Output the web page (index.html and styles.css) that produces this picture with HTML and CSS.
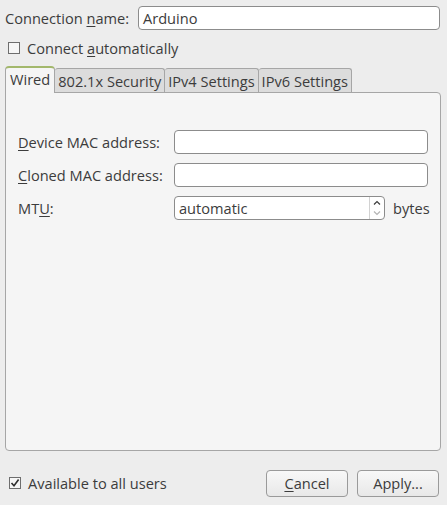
FILE: index.html
```html
<!DOCTYPE html>
<html>
<head>
<meta charset="utf-8">
<link rel="stylesheet" href="styles.css">
</head>
<body>
<div class="dialog">
  <div class="name-row">
    <span class="name-label">Connection <u>n</u>ame:</span>
    <div class="entry name-entry">Arduino</div>
  </div>
  <div class="check-row top-check">
    <span class="checkbox"></span>
    <span>Connect <u>a</u>utomatically</span>
  </div>
  <div class="notebook">
    <div class="tabs">
      <div class="tab active">Wired</div>
      <div class="tab">802.1x Security</div>
      <div class="tab">IPv4 Settings</div>
      <div class="tab">IPv6 Settings</div>
    </div>
    <div class="panel">
      <div class="form">
        <span class="flabel"><u>D</u>evice MAC address:</span>
        <div class="entry wide"></div>
        <span class="flabel"><u>C</u>loned MAC address:</span>
        <div class="entry wide"></div>
        <span class="flabel">MT<u>U</u>:</span>
        <div class="mtu">
          <div class="entry spin">
            <span class="spin-text">automatic</span>
            <span class="spin-btns">
              <svg width="10" height="22" viewBox="0 0 10 22">
                <path d="M2 7.5 L5 4.5 L8 7.5" fill="none" stroke="#3c3c3c" stroke-width="1.2"/>
                <path d="M2 14.5 L5 17.5 L8 14.5" fill="none" stroke="#b4b4b4" stroke-width="1.2"/>
              </svg>
            </span>
          </div>
          <span class="unit">bytes</span>
        </div>
      </div>
    </div>
  </div>
  <div class="footer">
    <div class="check-row">
      <span class="checkbox checked">
        <svg width="10" height="10" viewBox="0 0 10 10"><path d="M1.5 5 L4 7.8 L8.6 1.6" fill="none" stroke="#2e2e2e" stroke-width="1.6"/></svg>
      </span>
      <span>Available to all users</span>
    </div>
    <div class="buttons">
      <div class="button"><u>C</u>ancel</div>
      <div class="button">Apply...</div>
    </div>
  </div>
</div>
</body>
</html>
```
FILE: styles.css
```css
html, body {
  margin: 0;
  padding: 0;
  background: #ededed;
}
body {
  font-family: "Open Sans", "Noto Sans", "DejaVu Sans", sans-serif;
  font-size: 14.6px;
  color: #3c3c3c;
}
u {
  text-decoration: underline;
  text-underline-offset: 2px;
}
.dialog {
  width: 447px;
  height: 505px;
  box-sizing: border-box;
  padding: 6px 6px 8px 5px;
  display: flex;
  flex-direction: column;
}
.name-row {
  display: flex;
  align-items: center;
  height: 24px;
}
.name-label {
  width: 133px;
}
.entry {
  box-sizing: border-box;
  height: 24px;
  background: #ffffff;
  border: 1px solid #8c8c8c;
  border-radius: 4px;
  display: flex;
  align-items: center;
  padding-left: 4px;
  color: #3c3c3c;
}
.name-entry {
  flex: 1;
  margin-right: 1px;
}
.check-row {
  display: flex;
  align-items: center;
  gap: 7px;
}
.top-check {
  margin-top: 6px;
  height: 24px;
  padding-left: 3px;
}
.checkbox {
  box-sizing: border-box;
  width: 12px;
  height: 12px;
  border: 1px solid #6e6e6e;
  background: #f6f6f6;
  display: flex;
  align-items: center;
  justify-content: center;
}
.notebook {
  margin-top: 6px;
  flex: 1;
  display: flex;
  flex-direction: column;
}
.tabs {
  display: flex;
  align-items: flex-end;
  height: 26px;
  position: relative;
  z-index: 1;
}
.tab {
  box-sizing: border-box;
  height: 24px;
  padding: 0 3px 0 3px;
  background: #dcdcdc;
  border: 1px solid #a6a6a6;
  border-bottom: none;
  border-left: none;
  border-radius: 3px 3px 0 0;
  display: flex;
  align-items: center;
  white-space: nowrap;
}
.tab.active {
  height: 27px;
  background: #f5f5f5;
  border: 1px solid #a6a6a6;
  border-top: 2px solid #a3b86c;
  border-bottom: none;
  border-radius: 4px 4px 0 0;
  padding: 0 4px 3px 4px;
  margin-bottom: -1px;
}
.panel {
  flex: 1;
  background: #f5f5f5;
  border: 1px solid #a6a6a6;
  border-radius: 0 4px 4px 4px;
  padding: 37px 12px 0 12px;
}
.form {
  display: grid;
  grid-template-columns: 156px 1fr;
  row-gap: 9px;
  align-items: center;
}
.wide {
  width: 254px;
}
.mtu {
  display: flex;
  align-items: center;
  gap: 8px;
}
.spin {
  width: 211px;
  height: 24px;
  padding-right: 0;
  justify-content: space-between;
}
.spin-btns {
  display: flex;
  align-items: center;
  justify-content: center;
  width: 14px;
  height: 22px;
  border-left: 1px solid #d2d2d2;
}
.footer {
  margin-top: 18px;
  height: 28px;
  display: flex;
  align-items: center;
  justify-content: space-between;
  padding-left: 4px;
  padding-right: 2px;
}
.buttons {
  display: flex;
  gap: 9px;
}
.button {
  box-sizing: border-box;
  width: 82px;
  height: 27px;
  border: 1px solid #9a9a9a;
  border-radius: 4px;
  background: linear-gradient(#f8f8f8, #e8e8e8);
  display: flex;
  align-items: center;
  justify-content: center;
}
```
